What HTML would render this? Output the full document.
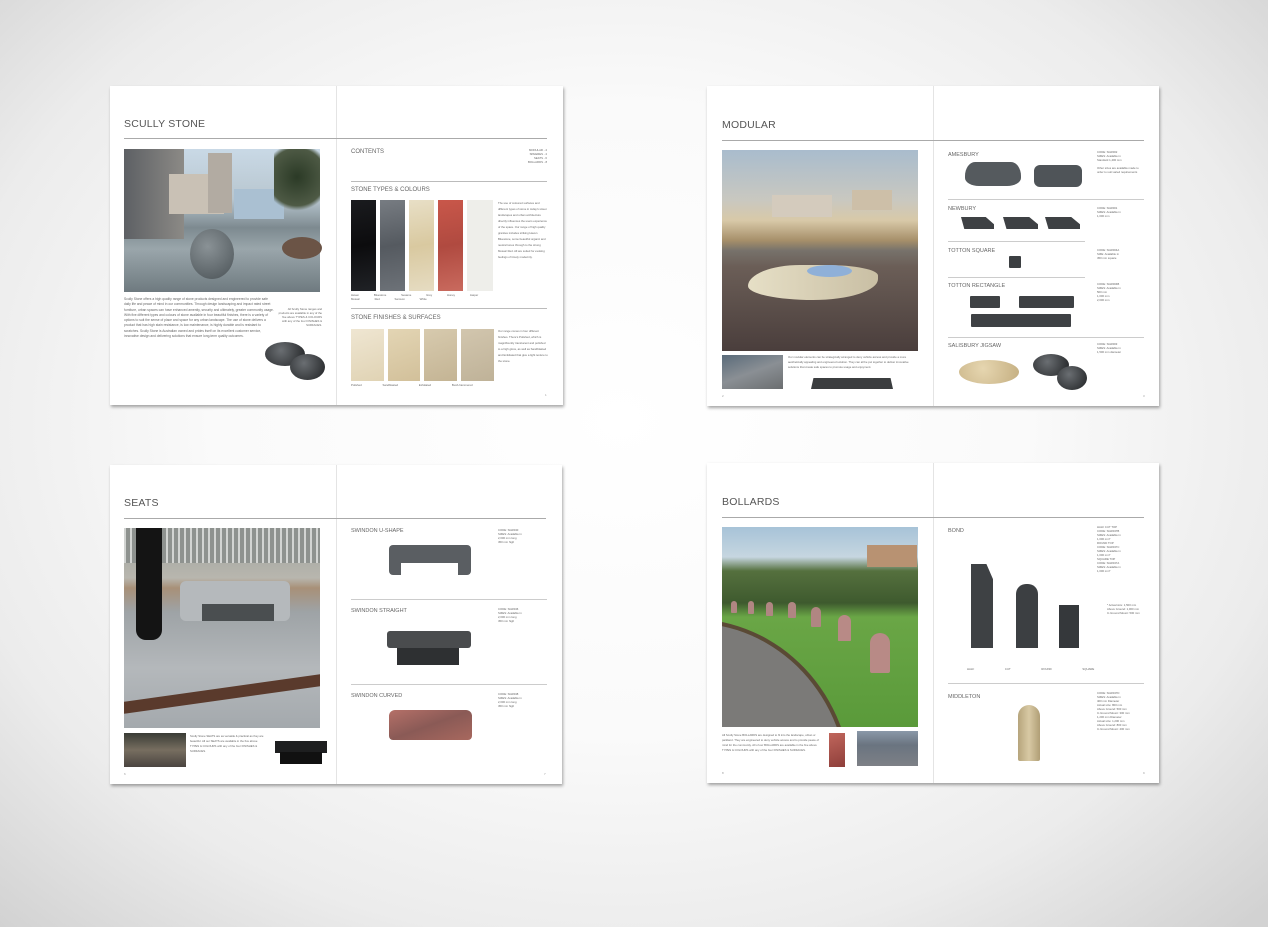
<!DOCTYPE html>
<html><head><meta charset="utf-8"><style>
*{margin:0;padding:0;box-sizing:border-box}
body{width:1268px;height:927px;overflow:hidden;position:relative;font-family:"Liberation Sans",sans-serif;
background:radial-gradient(ellipse 900px 700px at 620px 420px,#ffffff 0%,#fafafa 45%,#ececec 75%,#d2d2d2 100%);}
.a{position:absolute}
.sp{position:absolute;background:#fff;box-shadow:1px 2px 3px rgba(0,0,0,.35)}
.spine{position:absolute;top:0;bottom:0;width:1px;background:#e4e4e4}
.t{position:absolute;font-size:10.5px;color:#555;letter-spacing:.2px;white-space:nowrap}
.h{position:absolute;font-size:6px;color:#666;white-space:nowrap}
.hl{position:absolute;height:1px;background:#aaa}
.tx{position:absolute;font-size:3.3px;line-height:5.3px;color:#666;overflow:hidden}
.sm{position:absolute;font-size:2.8px;line-height:4px;color:#666;overflow:hidden}
.pn{position:absolute;font-size:3px;color:#999}
</style></head><body>

<!-- SPREAD 1 -->
<div class="sp" style="left:110px;top:86px;width:453px;height:319px">
 <div class="spine" style="left:226px"></div>
 <div class="t" style="left:14px;top:32px">SCULLY STONE</div>
 <div class="hl" style="left:14px;top:52px;width:423px"></div>
 <div class="a" style="left:14px;top:63px;width:196px;height:143px;background:linear-gradient(180deg,#c9d9e6 0%,#b8c6cf 35%,#7d8a90 55%,#9aa6ab 70%,#6f7a80 100%)">
  <div class="a" style="left:0;top:0;width:60px;height:90px;background:linear-gradient(90deg,#5d6064,#8c8a86)"></div>
  <div class="a" style="left:45px;top:25px;width:55px;height:40px;background:#c9c1b5"></div>
  <div class="a" style="left:84px;top:4px;width:24px;height:60px;background:#b2aba2"></div>
  <div class="a" style="left:110px;top:40px;width:50px;height:30px;background:#aac0d2"></div>
  <div class="a" style="left:150px;top:0;width:46px;height:70px;background:radial-gradient(circle at 50% 40%,#2b3a26,#4e5a45 60%,transparent 70%)"></div>
  <div class="a" style="left:66px;top:80px;width:44px;height:50px;border-radius:50%;background:radial-gradient(circle at 40% 35%,#8a9296,#4a5256)"></div>
  <div class="a" style="left:158px;top:88px;width:40px;height:22px;border-radius:50%;background:#6b5446"></div>
 </div>
 <div class="tx" style="left:14px;top:211px;width:150px;height:90px">Scully Stone offers a high quality range of stone products designed and engineered to provide safe daily life and peace of mind in our communities. Through design landscaping and impact rated street furniture, urban spaces can have enhanced amenity, security and ultimately, greater community usage. With five different types and colours of stone available in four beautiful finishes, there is a variety of options to suit the sense of place and space for any urban landscape. The use of stone delivers a product that has high stain resistance, is low maintenance, is highly durable and is resistant to scratches. Scully Stone is Australian owned and prides itself on its excellent customer service, innovative design and delivering solutions that ensure long-term quality outcomes.</div>
 <div class="sm" style="left:168px;top:221px;width:44px;height:30px;text-align:right">All Scully Stone ranges and products are available in any of the five above TYPES &amp; COLOURS with any of the four FINISHES &amp; SURFACES.</div>
 <div class="a" style="left:155px;top:256px;width:40px;height:24px;border-radius:50%;background:radial-gradient(circle at 40% 35%,#6a6e72,#1e2022)"></div>
 <div class="a" style="left:180px;top:268px;width:35px;height:26px;border-radius:50%;background:radial-gradient(circle at 40% 35%,#6a6e72,#1e2022)"></div>
 <div class="h" style="left:241px;top:63px">CONTENTS</div>
 <div class="sm" style="left:400px;top:62px;width:37px;height:20px;text-align:right">MODULAR - 2<br>SPHERES - 4<br>SEATS - 6<br>BOLLARDS - 8</div>
 <div class="hl" style="left:241px;top:95px;width:196px;background:#bbb"></div>
 <div class="h" style="left:241px;top:101px">STONE TYPES &amp; COLOURS</div>
 <div class="a" style="left:241px;top:114px;width:25px;height:91px;background:linear-gradient(170deg,#1a1b1e,#0c0c0e 50%,#202226)"></div>
 <div class="a" style="left:270px;top:114px;width:25px;height:91px;background:linear-gradient(170deg,#777c82,#555a60 50%,#6d7278)"></div>
 <div class="a" style="left:299px;top:114px;width:25px;height:91px;background:linear-gradient(170deg,#e8dfc6,#d9c9a0 50%,#e6dcc2)"></div>
 <div class="a" style="left:328px;top:114px;width:25px;height:91px;background:linear-gradient(170deg,#c9574a,#b04a40 50%,#c96a5e)"></div>
 <div class="a" style="left:357px;top:114px;width:26px;height:91px;background:#eeeeea"></div>
 <div class="sm" style="left:241px;top:207px;width:145px;word-spacing:14px">Haven Bluestone Sesame Grey Honey Jasper Mosaic Red Samson White</div>
 <div class="sm" style="left:388px;top:114px;width:50px;height:90px;line-height:6px">The use of coloured surfaces and different types of stone in today's street landscapes and urban architecture directly influences the users experience of the space. Our range of high quality granites includes striking Haven Bluestone, some beautiful organic and neutral tones through to the strong Mosaic Red. All are suited for evoking feelings of timely modernity.</div>
 <div class="hl" style="left:241px;top:222px;width:196px;background:#bbb"></div>
 <div class="h" style="left:241px;top:229px">STONE FINISHES &amp; SURFACES</div>
 <div class="a" style="left:241px;top:243px;width:33px;height:52px;background:linear-gradient(160deg,#efe6d2,#e0d3b4)"></div>
 <div class="a" style="left:278px;top:243px;width:32px;height:52px;background:linear-gradient(160deg,#e3d5b4,#d2c09a)"></div>
 <div class="a" style="left:314px;top:243px;width:33px;height:52px;background:linear-gradient(160deg,#d7caae,#c4b494)"></div>
 <div class="a" style="left:351px;top:243px;width:33px;height:52px;background:linear-gradient(160deg,#d2c6ae,#bfb298)"></div>
 <div class="sm" style="left:241px;top:297px;width:145px;word-spacing:20px">Polished Sandblasted Exfoliated Bush-hammered</div>
 <div class="sm" style="left:388px;top:242px;width:50px;height:58px;line-height:6px">Our range comes in four different finishes. There's Polished, which is magnificently translucent and polished to a high gloss, as well as Sandblasted and Exfoliated that give a light texture to the stone.</div>
 <div class="pn" style="left:435px;top:307px">1</div>
</div>

<!-- SPREAD 2 -->
<div class="sp" style="left:707px;top:86px;width:452px;height:320px">
 <div class="spine" style="left:226px"></div>
 <div class="t" style="left:15px;top:33px">MODULAR</div>
 <div class="hl" style="left:15px;top:54px;width:422px"></div>
 <div class="a" style="left:15px;top:64px;width:196px;height:201px;background:linear-gradient(180deg,#a9bccd 0%,#c9c8c0 25%,#d8c9a8 35%,#a68f6a 45%,#77726b 50%,#6b5e57 58%,#4a3e3c 100%)">
  <div class="a" style="left:50px;top:45px;width:60px;height:22px;background:#d4cbbd"></div>
  <div class="a" style="left:130px;top:40px;width:40px;height:20px;background:#cdbfa8"></div>
  <div class="a" style="left:26px;top:115px;width:130px;height:35px;border-radius:40% 40% 50% 50%/60% 30% 60% 40%;background:linear-gradient(90deg,#e6dfc6,#c9bfa4)"></div>
  <div class="a" style="left:85px;top:115px;width:45px;height:12px;border-radius:50%;background:#8fb0d8"></div>
 </div>
 <div class="a" style="left:15px;top:269px;width:61px;height:34px;background:linear-gradient(160deg,#5a6b7a,#8a8f94 50%,#6b6e70)"></div>
 <div class="sm" style="left:81px;top:269px;width:128px;height:16px;line-height:5px">Our modular elements can be strategically arranged to deny vehicle access and provide a more aesthetically appealing and engineered solution. They can all be put together to deliver innovative solutions that create safe spaces to promote usage and enjoyment.</div>
 <div class="a" style="left:104px;top:292px;width:82px;height:11px;background:#3b3d3f;clip-path:polygon(3% 0,97% 0,100% 100%,0 100%)"></div>
 <div class="h" style="left:241px;top:66px;font-size:5.5px">AMESBURY</div>
 <div class="sm" style="left:390px;top:64px;width:45px;height:35px">CODE: SGR002<br>SIZES: Available in<br>Standard 1,400 mm<br><br>Other sizes are available made to order to suit varied requirements</div>
 <div class="a" style="left:258px;top:76px;width:56px;height:24px;background:#555a5e;border-radius:10px 10px 14px 14px/14px 14px 8px 8px"></div>
 <div class="a" style="left:327px;top:79px;width:48px;height:22px;background:#4f5458;border-radius:6px"></div>
 <div class="hl" style="left:241px;top:113px;width:196px;background:#ccc"></div>
 <div class="h" style="left:241px;top:120px;font-size:5.5px">NEWBURY</div>
 <div class="sm" style="left:390px;top:120px;width:45px">CODE: SGR001<br>SIZES: Available in<br>1,000 mm</div>
 <div class="a" style="left:254px;top:131px;width:33px;height:12px;background:#3e4144;clip-path:polygon(0 0,75% 0,100% 60%,100% 100%,10% 100%)"></div>
 <div class="a" style="left:296px;top:131px;width:35px;height:12px;background:#3e4144;clip-path:polygon(0 0,75% 0,100% 60%,100% 100%,10% 100%)"></div>
 <div class="a" style="left:338px;top:131px;width:35px;height:12px;background:#3e4144;clip-path:polygon(0 0,75% 0,100% 60%,100% 100%,10% 100%)"></div>
 <div class="hl" style="left:241px;top:155px;width:137px;background:#ccc"></div>
 <div class="h" style="left:241px;top:162px;font-size:5.5px">TOTTON SQUARE</div>
 <div class="sm" style="left:390px;top:162px;width:45px">CODE: SGR004A<br>SIZE: Available in<br>450 mm square</div>
 <div class="a" style="left:302px;top:170px;width:12px;height:12px;background:#3c3f42;border-radius:1px"></div>
 <div class="hl" style="left:241px;top:191px;width:137px;background:#ccc"></div>
 <div class="h" style="left:241px;top:197px;font-size:5.5px">TOTTON RECTANGLE</div>
 <div class="sm" style="left:390px;top:196px;width:45px">CODE: SGR004B<br>SIZES: Available in<br>500 mm<br>1,000 mm<br>2,000 mm</div>
 <div class="a" style="left:263px;top:210px;width:30px;height:12px;background:#3e4144;border-radius:1px"></div>
 <div class="a" style="left:312px;top:210px;width:55px;height:12px;background:#3e4144;border-radius:1px"></div>
 <div class="a" style="left:264px;top:228px;width:100px;height:13px;background:#3e4144;border-radius:1px"></div>
 <div class="hl" style="left:241px;top:251px;width:196px;background:#ccc"></div>
 <div class="h" style="left:241px;top:257px;font-size:5.5px">SALISBURY JIGSAW</div>
 <div class="sm" style="left:390px;top:256px;width:45px">CODE: SGR003<br>SIZES: Available in<br>1,500 mm diameter</div>
 <div class="a" style="left:252px;top:274px;width:60px;height:24px;border-radius:50%;background:radial-gradient(circle at 40% 35%,#e6d6b0,#c4ae80)"></div>
 <div class="a" style="left:326px;top:268px;width:36px;height:22px;border-radius:50%;background:radial-gradient(circle at 40% 35%,#6a6e72,#1e2022)"></div>
 <div class="a" style="left:350px;top:280px;width:30px;height:24px;border-radius:50%;background:radial-gradient(circle at 40% 35%,#6a6e72,#1e2022)"></div>
 <div class="pn" style="left:15px;top:308px">2</div>
 <div class="pn" style="left:436px;top:308px">3</div>
</div>

<!-- SPREAD 3 -->
<div class="sp" style="left:110px;top:465px;width:452px;height:319px">
 <div class="spine" style="left:226px"></div>
 <div class="t" style="left:14px;top:32px">SEATS</div>
 <div class="hl" style="left:14px;top:53px;width:422px"></div>
 <div class="a" style="left:14px;top:63px;width:196px;height:200px;background:linear-gradient(180deg,#9aa09c 0%,#b8b6ae 25%,#a89078 30%,#9ea3a6 42%,#b4b8bb 70%,#a4a9ad 100%)">
  <div class="a" style="left:0;top:0;width:196px;height:35px;background:repeating-linear-gradient(90deg,#d2d4d2 0 2px,#8e928f 2px 6px)"></div>
  <div class="a" style="left:12px;top:0;width:26px;height:112px;background:#141414;border-radius:0 0 10px 10px"></div>
  <div class="a" style="left:56px;top:53px;width:110px;height:40px;background:#b5b9bc;border-radius:6px"></div>
  <div class="a" style="left:78px;top:76px;width:72px;height:17px;background:#4a4e50"></div>
  <div class="a" style="left:0;top:160px;width:196px;height:12px;background:#5a3a2c;transform:skewY(-8deg)"></div>
 </div>
 <div class="a" style="left:14px;top:268px;width:62px;height:34px;background:linear-gradient(180deg,#3a3c36,#776e60 50%,#4a4440)"></div>
 <div class="sm" style="left:80px;top:269px;width:75px;height:24px;line-height:5px">Scully Stone SEATS are as versatile &amp; practical as they are beautiful. All our SEATS are available in the five above TYPES &amp; COLOURS with any of the four FINISHES &amp; SURFACES.</div>
 <div class="a" style="left:165px;top:276px;width:52px;height:12px;background:#1e1f20"></div>
 <div class="a" style="left:170px;top:287px;width:42px;height:12px;background:#111"></div>
 <div class="h" style="left:241px;top:63px;font-size:5.5px">SWINDON U-SHAPE</div>
 <div class="sm" style="left:388px;top:63px;width:45px">CODE: SGR040<br>SIZES: Available in<br>2,000 mm long<br>450 mm high</div>
 <div class="a" style="left:279px;top:80px;width:82px;height:30px;background:#5a5e62;border-radius:4px"></div>
 <div class="a" style="left:291px;top:98px;width:57px;height:14px;background:#fff"></div>
 <div class="hl" style="left:241px;top:134px;width:196px;background:#ccc"></div>
 <div class="h" style="left:241px;top:143px;font-size:5.5px">SWINDON STRAIGHT</div>
 <div class="sm" style="left:388px;top:142px;width:45px">CODE: SGR046<br>SIZES: Available in<br>2,000 mm long<br>450 mm high</div>
 <div class="a" style="left:277px;top:166px;width:84px;height:17px;background:#4a4c4e;border-radius:3px"></div>
 <div class="a" style="left:287px;top:183px;width:62px;height:17px;background:#2e3032"></div>
 <div class="hl" style="left:241px;top:219px;width:196px;background:#ccc"></div>
 <div class="h" style="left:241px;top:228px;font-size:5.5px">SWINDON CURVED</div>
 <div class="sm" style="left:388px;top:227px;width:45px">CODE: SGR048<br>SIZES: Available in<br>2,000 mm long<br>450 mm high</div>
 <div class="a" style="left:279px;top:245px;width:83px;height:30px;border-radius:6px 6px 4px 4px;background:linear-gradient(160deg,#b57068,#8a5a56 50%,#a8685e)"></div>
 <div class="pn" style="left:14px;top:307px">6</div>
 <div class="pn" style="left:434px;top:307px">7</div>
</div>

<!-- SPREAD 4 -->
<div class="sp" style="left:707px;top:463px;width:452px;height:320px">
 <div class="spine" style="left:226px"></div>
 <div class="t" style="left:15px;top:33px">BOLLARDS</div>
 <div class="hl" style="left:15px;top:54px;width:422px"></div>
 <div class="a" style="left:15px;top:64px;width:196px;height:200px;background:linear-gradient(180deg,#a7c3d8 0%,#c6d6e0 15%,#55703e 22%,#3e5a2e 38%,#6aa646 45%,#5a9a3a 100%);overflow:hidden">
  <div class="a" style="left:145px;top:18px;width:50px;height:22px;background:#b89272"></div>
  <div class="a" style="left:-30px;top:92px;width:160px;height:170px;border-radius:0 100% 0 0;background:#7b7a78;border-top:4px solid #5a4a35;border-right:4px solid #5a4a35"></div>
  <div class="a" style="left:148px;top:106px;width:20px;height:40px;border-radius:10px 10px 2px 2px;background:#b88a86"></div>
  <div class="a" style="left:116px;top:88px;width:13px;height:26px;border-radius:7px 7px 1px 1px;background:#b88a86"></div>
  <div class="a" style="left:89px;top:80px;width:10px;height:20px;border-radius:5px 5px 1px 1px;background:#b08682"></div>
  <div class="a" style="left:66px;top:75px;width:8px;height:16px;border-radius:4px 4px 1px 1px;background:#b08682"></div>
  <div class="a" style="left:44px;top:75px;width:7px;height:14px;border-radius:4px 4px 1px 1px;background:#b08682"></div>
  <div class="a" style="left:26px;top:74px;width:6px;height:13px;border-radius:3px 3px 1px 1px;background:#b08682"></div>
  <div class="a" style="left:9px;top:74px;width:6px;height:12px;border-radius:3px 3px 1px 1px;background:#b08682"></div>
 </div>
 <div class="sm" style="left:15px;top:270px;width:98px;height:28px;line-height:5px">All Scully Stone BOLLARDS are designed to fit into the landscape, urban or parkland. They are engineered to deny vehicle access and to provide peace of mind for the community. All of our BOLLARDS are available in the five above TYPES &amp; COLOURS with any of the four FINISHES &amp; SURFACES.</div>
 <div class="a" style="left:122px;top:270px;width:16px;height:34px;background:linear-gradient(160deg,#c0665c,#8e3e3a)"></div>
 <div class="a" style="left:150px;top:268px;width:61px;height:35px;background:linear-gradient(180deg,#8a98a8,#6a7480 40%,#7d8086)"></div>
 <div class="h" style="left:241px;top:65px;font-size:5.5px">BOND</div>
 <div class="sm" style="left:390px;top:62px;width:45px;height:70px">HALF CUT TOP<br>CODE: SGR047B<br>SIZES: Available in<br>1,000 mm*<br>ROUND TOP<br>CODE: SGR047C<br>SIZES: Available in<br>1,000 mm*<br>SQUARE TOP<br>CODE: SGR047A<br>SIZES: Available in<br>1,000 mm*</div>
 <div class="sm" style="left:400px;top:140px;width:45px">* Actual size: 1,500 mm<br>Above Ground: 1,000 mm<br>In Ground Mount: 500 mm</div>
 <div class="a" style="left:264px;top:101px;width:22px;height:84px;background:#3e4144;clip-path:polygon(0 0,70% 0,100% 18%,100% 100%,0 100%)"></div>
 <div class="a" style="left:309px;top:121px;width:22px;height:64px;background:#3c3f42;border-radius:10px 10px 0 0"></div>
 <div class="a" style="left:352px;top:142px;width:20px;height:43px;background:#35383b"></div>
 <div class="sm" style="left:260px;top:204px;width:130px;word-spacing:30px">HALF CUT ROUND SQUARE</div>
 <div class="hl" style="left:241px;top:220px;width:196px;background:#ccc"></div>
 <div class="h" style="left:241px;top:231px;font-size:5.5px">MIDDLETON</div>
 <div class="sm" style="left:390px;top:228px;width:48px;height:60px">CODE: SGR047D<br>SIZES: Available in<br>400 mm Diameter<br>Actual size: 800 mm<br>Above Ground: 500 mm<br>In Ground Mount: 300 mm<br>1,200 mm Diameter<br>Actual size: 1,200 mm<br>Above Ground: 800 mm<br>In Ground Mount: 400 mm</div>
 <div class="a" style="left:311px;top:242px;width:22px;height:56px;border-radius:11px 11px 2px 2px;background:linear-gradient(90deg,#b6a57c,#d8c9a4 50%,#b09e76)"></div>
 <div class="pn" style="left:15px;top:308px">8</div>
 <div class="pn" style="left:436px;top:308px">9</div>
</div>
</body></html>
